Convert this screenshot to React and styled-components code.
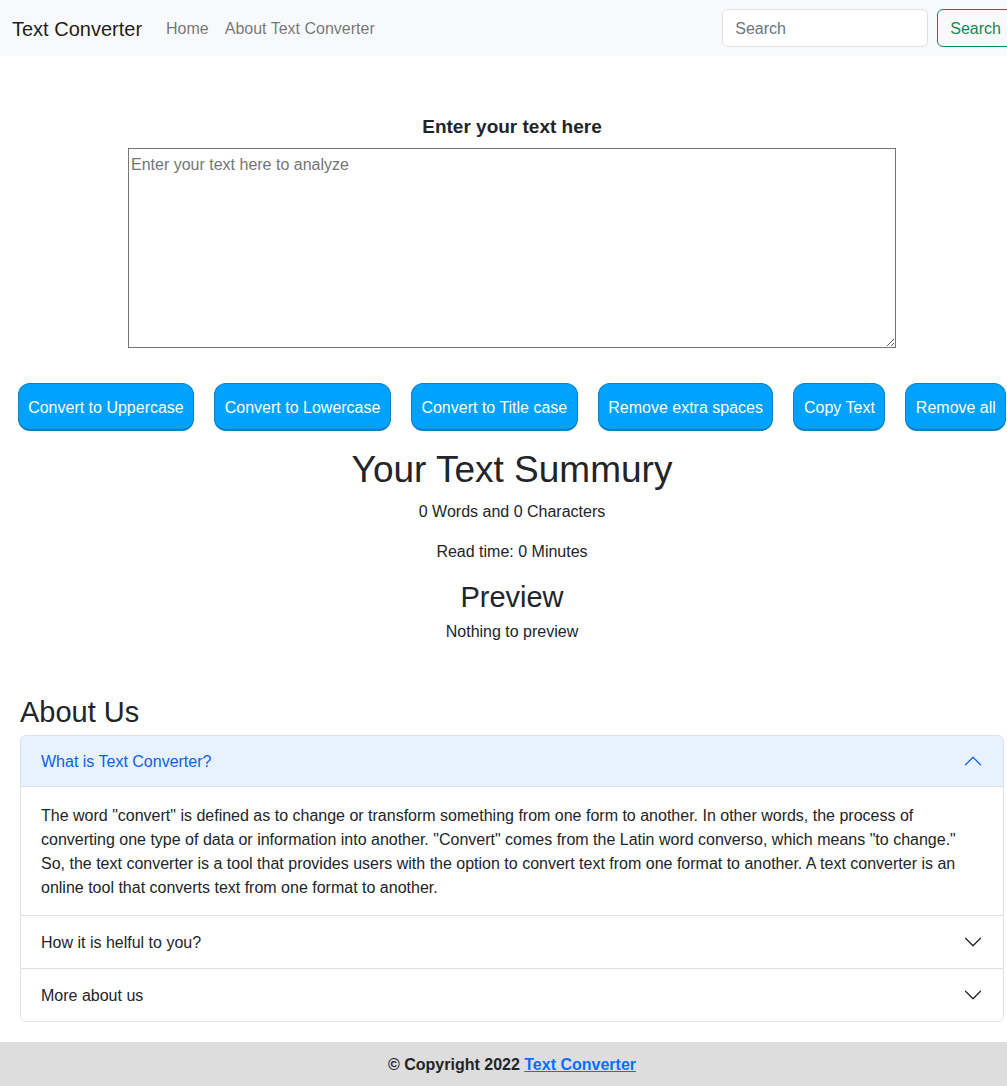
import React from "react";
import styled, { createGlobalStyle } from "styled-components";

const Global = createGlobalStyle`
  html { overflow-x: hidden; }
  body {
    margin: 0;
    font-family: "Liberation Sans", Arial, sans-serif;
    font-size: 16px;
    line-height: 1.5;
    color: #212529;
    background: #fff;
  }
  * { box-sizing: border-box; }
`;

const Chevron = ({ up, color }) => (
  <svg
    width="20"
    height="20"
    viewBox="0 0 16 16"
    style={{ transform: up ? "rotate(-180deg)" : "none" }}
  >
    <path
      fill={color}
      fillRule="evenodd"
      d="M1.646 4.646a.5.5 0 0 1 .708 0L8 10.293l5.646-5.647a.5.5 0 0 1 .708.708l-6 6a.5.5 0 0 1-.708 0l-6-6a.5.5 0 0 1 0-.708z"
    />
  </svg>
);

const buttons = [
  "Convert to Uppercase",
  "Convert to Lowercase",
  "Convert to Title case",
  "Remove extra spaces",
  "Copy Text",
  "Remove all",
];

const App = () => {
  return (
    <Page>
      <Global />
      <Navbar>
        <Brand>Text Converter</Brand>
        <NavLinks>
          <NavLink>Home</NavLink>
          <NavLink>About Text Converter</NavLink>
        </NavLinks>
        <SearchForm>
          <SearchInput placeholder="Search" />
          <SearchButton>Search</SearchButton>
        </SearchForm>
      </Navbar>

      <Main>
        <Label>Enter your text here</Label>
        <TextBox rows="8" placeholder="Enter your text here to analyze" />
        <ButtonRow>
          {buttons.map((b) => (
            <ActionButton key={b}>{b}</ActionButton>
          ))}
        </ButtonRow>
        <Summary>
          <h1>Your Text Summury</h1>
          <p>0 Words and 0 Characters</p>
          <p>Read time: 0 Minutes</p>
          <h2>Preview</h2>
          <p>Nothing to preview</p>
        </Summary>
      </Main>

      <About>
        <h2>About Us</h2>
        <Accordion>
          <Item>
            <ItemHeader open>
              What is Text Converter?
              <Chevron up color="#0c63e4" />
            </ItemHeader>
            <ItemBody>
              The word "convert" is defined as to change or transform something
              from one form to another. In other words, the process of
              converting one type of data or information into another.
              "Convert" comes from the Latin word converso, which means "to
              change." So, the text converter is a tool that provides users
              with the option to convert text from one format to another. A
              text converter is an online tool that converts text from one
              format to another.
            </ItemBody>
          </Item>
          <Item>
            <ItemHeader>
              How it is helful to you?
              <Chevron color="#212529" />
            </ItemHeader>
          </Item>
          <Item>
            <ItemHeader>
              More about us
              <Chevron color="#212529" />
            </ItemHeader>
          </Item>
        </Accordion>
      </About>

      <Footer>
        © Copyright 2022 <a href="#">Text Converter</a>
      </Footer>
    </Page>
  );
};

export default App;

const Page = styled.div`
  width: 1024px;
`;

const Navbar = styled.nav`
  height: 56px;
  background-color: #f8f9fa;
  display: flex;
  align-items: center;
  padding: 1px 12px 0;
`;

const Brand = styled.div`
  font-size: 20px;
  color: rgba(0, 0, 0, 0.9);
  margin-right: 16px;
`;

const NavLinks = styled.div`
  display: flex;
  flex: 1;
`;

const NavLink = styled.div`
  padding: 8px;
  color: rgba(0, 0, 0, 0.55);
`;

const SearchForm = styled.form`
  display: flex;
  gap: 9px;
  margin: 0 0 1px;
`;

const SearchInput = styled.input`
  width: 206px;
  height: 38px;
  padding: 7px 12px 5px;
  font: inherit;
  color: #212529;
  border: 1px solid #dee2e6;
  border-radius: 6px;
  background: #fff;
  &::placeholder {
    color: #6c757d;
  }
`;

const SearchButton = styled.button`
  height: 38px;
  padding: 7px 10px 5px 12px;
  font: inherit;
  color: #198754;
  background: transparent;
  border: 1px solid #198754;
  border-radius: 6px;
`;

const Main = styled.div`
  display: flex;
  flex-direction: column;
  align-items: center;
  padding-top: 60px;
`;

const Label = styled.div`
  font-size: 19px;
  font-weight: bold;
  line-height: 1.2;
  margin-bottom: 9px;
`;

const TextBox = styled.textarea`
  display: block;
  width: 768px;
  height: 200px;
  padding: 4px 2px 2px;
  font: inherit;
  color: #212529;
  border: 1px solid #767676;
  resize: vertical;
  &::placeholder {
    color: #757575;
  }
`;

const ButtonRow = styled.div`
  display: flex;
  justify-content: center;
  gap: 20px;
  margin-top: 35px;
`;

const ActionButton = styled.button`
  height: 48px;
  padding: 3px 9.5px 0;
  font: inherit;
  color: #fff;
  background-color: #00a2ff;
  border: 1px solid #0b80c5;
  border-bottom-width: 2px;
  border-radius: 12px;
  white-space: nowrap;
`;

const Summary = styled.div`
  display: flex;
  flex-direction: column;
  align-items: center;
  margin-top: 17px;

  h1 {
    font-size: 37px;
    font-weight: 500;
    line-height: 1.2;
    margin: 0 0 8px;
  }
  h2 {
    font-size: 29px;
    font-weight: 500;
    line-height: 1.2;
    margin: 0 0 5px;
  }
  p {
    margin: 0 0 16px;
  }
`;

const About = styled.div`
  padding: 35px 20px 0;

  h2 {
    font-size: 29px;
    font-weight: 500;
    line-height: 1.2;
    margin: 0 0 5px;
  }
`;

const Accordion = styled.div`
  border: 1px solid #dee2e6;
  border-radius: 6px;
  overflow: hidden;
`;

const Item = styled.div`
  & + & {
    border-top: 1px solid #dee2e6;
  }
`;

const ItemHeader = styled.div`
  display: flex;
  align-items: center;
  justify-content: space-between;
  height: ${(p) => (p.open ? "51px" : "52px")};
  padding: 2px 20px 0;
  color: ${(p) => (p.open ? "#0c63e4" : "#212529")};
  background-color: ${(p) => (p.open ? "#e7f1ff" : "#fff")};
  border-bottom: ${(p) => (p.open ? "1px solid #dee2e6" : "none")};

  svg {
    margin-top: -2px;
  }
`;

const ItemBody = styled.div`
  padding: 17px 20px 15px;
`;

const Footer = styled.footer`
  margin-top: 20px;
  height: 44px;
  padding-top: 2px;
  background-color: #dddddd;
  display: flex;
  align-items: center;
  justify-content: center;
  font-weight: bold;
  white-space: pre;

  a {
    color: #0d6efd;
    text-decoration: underline;
  }
`;
